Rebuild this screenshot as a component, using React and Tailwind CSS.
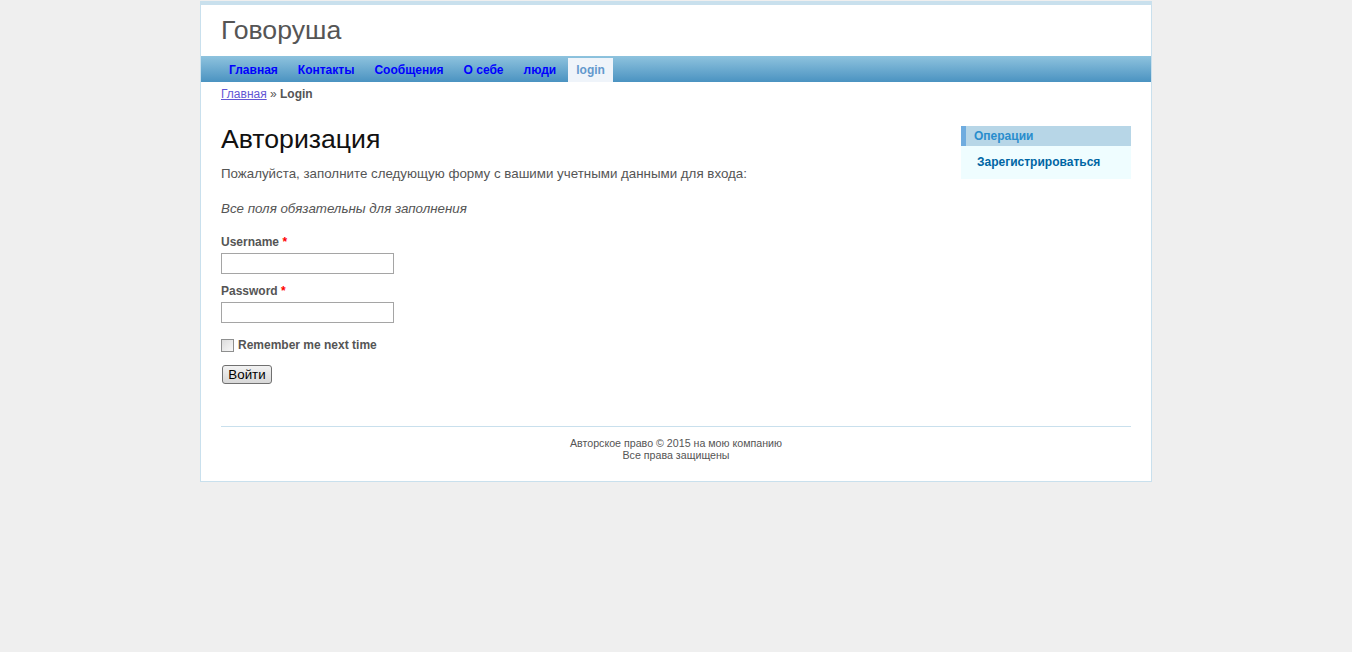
import React from 'react';

const menuItems = [
  { label: 'Главная' },
  { label: 'Контакты' },
  { label: 'Сообщения' },
  { label: 'О себе' },
  { label: 'люди' },
  { label: 'login', active: true },
];

const Field = ({ label, type = 'text', className = '' }) => (
  <div className={className}>
    <label className="block pt-[1px] text-[12px] leading-[17px] font-bold text-[#555]">
      {label} <span className="text-[#ff0000]">*</span>
    </label>
    <input
      type={type}
      className="mt-[2px] block w-[173px] h-[21px] border border-[#a5a5a5] bg-white px-1 text-[13px] outline-none"
    />
  </div>
);

const App = () => {
  return (
    <div
      className="min-h-[652px] bg-[#efefef] pt-[1px] text-[#555] text-[13.33px]"
      style={{ fontFamily: '"Liberation Sans", Arial, Helvetica, sans-serif' }}
    >
      <div className="mx-auto w-[952px] border border-[#c9e0ed] bg-white">
        {/* Header */}
        <div className="border-t-[3px] border-[#c9e0ed] px-[20px] py-[10px]">
          <div className="text-[26.67px] leading-[31px] text-[#555]">Говоруша</div>
        </div>

        {/* Main menu */}
        <div className="h-[26px] bg-gradient-to-b from-[#8ec3de] to-[#4a93c1]">
          <ul className="flex gap-[4px] px-[20px] pt-[2px]">
            {menuItems.map((item) => (
              <li key={item.label}>
                <a
                  href="#"
                  className={`block px-[8px] py-[5px] text-[12px] leading-[14px] font-bold no-underline ${
                    item.active ? 'bg-[#eff4fa] text-[#6399cd]' : 'text-[#0000ff]'
                  }`}
                >
                  {item.label}
                </a>
              </li>
            ))}
          </ul>
        </div>

        {/* Breadcrumbs */}
        <div className="px-[20px] py-[5px] text-[12px] leading-[14px]">
          <a href="#" className="text-[#6256d4] underline">Главная</a>
          <span> » </span>
          <span className="font-bold">Login</span>
        </div>

        <div className="flex">
          {/* Content */}
          <div className="w-[750px] mr-[10px] px-[20px] pt-[20px] pb-[31px]">
            <h1 className="text-[26.67px] leading-[27px] text-[#111]">Авторизация</h1>
            <p className="mt-[11px] leading-[20px]">
              Пожалуйста, заполните следующую форму с вашими учетными данными для входа:
            </p>

            <div className="mt-[15px]">
              <p className="italic leading-[20px]">Все поля обязательны для заполнения</p>

              <Field label="Username" className="mt-[14px]" />
              <Field label="Password" type="password" className="mt-[8px]" />

              <div className="mt-[13px] flex items-center h-[18px]">
                <span className="inline-block w-[13px] h-[13px] border border-[#8e8f8f] bg-gradient-to-br from-[#dcdcdc] to-[#f8f8f8]" />
                <label className="ml-[4px] text-[12px] font-bold leading-[18px]">Remember me next time</label>
              </div>

              <div className="mt-[11px]">
                <button className="ml-[1px] h-[19px] w-[50px] rounded-[3px] border border-[#707070] bg-gradient-to-b from-[#f2f2f2] to-[#d8d8d8] text-[13.33px] leading-[15px] text-black">
                  Войти
                </button>
              </div>
            </div>
          </div>

          {/* Sidebar */}
          <div className="w-[190px] pt-[20px] pr-[20px]">
            <div className="border-l-[5px] border-[#6facdf] bg-[#b7d6e7] px-[8px] py-[3px]">
              <div className="text-[12px] leading-[14px] font-bold text-[#298dcd]">Операции</div>
            </div>
            <div className="bg-[#effdff] px-[8px] py-[7px]">
              <a href="#" className="block pl-[8px] py-[2px] text-[12px] leading-[15px] font-bold text-[#0066a4] no-underline">
                Зарегистрироваться
              </a>
            </div>
          </div>
        </div>

        {/* Footer */}
        <div className="mx-[20px] mb-[10px] mt-[10px] border-t border-[#c9e0ed] p-[10px] text-center text-[10.67px] leading-[12px]">
          Авторское право © 2015 на мою компанию
          <br />
          Все права защищены
        </div>
      </div>
    </div>
  );
};

export default App;
